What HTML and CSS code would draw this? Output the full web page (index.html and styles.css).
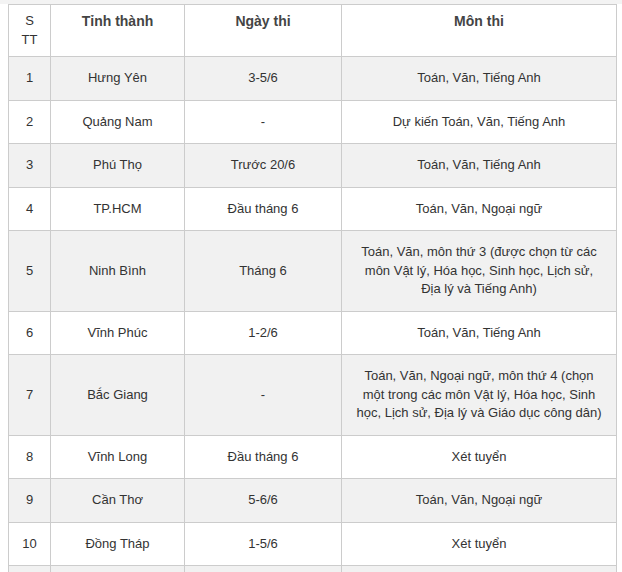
FILE: index.html
```html
<!DOCTYPE html>
<html lang="vi">
<head>
<meta charset="utf-8">
<link rel="stylesheet" href="styles.css">
</head>
<body>
<div class="topband"></div>
<table class="exam">
  <colgroup>
    <col class="c1"><col class="c2"><col class="c3"><col class="c4">
  </colgroup>
  <thead>
    <tr><th class="stt">S<br>TT</th><th>Tỉnh thành</th><th>Ngày thi</th><th>Môn thi</th></tr>
  </thead>
  <tbody>
    <tr class="alt"><td>1</td><td>Hưng Yên</td><td>3-5/6</td><td>Toán, Văn, Tiếng Anh</td></tr>
    <tr><td>2</td><td>Quảng Nam</td><td>-</td><td>Dự kiến Toán, Văn, Tiếng Anh</td></tr>
    <tr class="alt"><td>3</td><td>Phú Thọ</td><td>Trước 20/6</td><td>Toán, Văn, Tiếng Anh</td></tr>
    <tr><td>4</td><td>TP.HCM</td><td>Đầu tháng 6</td><td>Toán, Văn, Ngoại ngữ</td></tr>
    <tr class="alt"><td>5</td><td>Ninh Bình</td><td>Tháng 6</td><td>Toán, Văn, môn thứ 3 (được chọn từ các môn Vật lý, Hóa học, Sinh học, Lịch sử, Địa lý và Tiếng Anh)</td></tr>
    <tr><td>6</td><td>Vĩnh Phúc</td><td>1-2/6</td><td>Toán, Văn, Tiếng Anh</td></tr>
    <tr class="alt"><td>7</td><td>Bắc Giang</td><td>-</td><td>Toán, Văn, Ngoại ngữ, môn thứ 4 (chọn một trong các môn Vật lý, Hóa học, Sinh học, Lịch sử, Địa lý và Giáo dục công dân)</td></tr>
    <tr><td>8</td><td>Vĩnh Long</td><td>Đầu tháng 6</td><td>Xét tuyển</td></tr>
    <tr class="alt"><td>9</td><td>Cần Thơ</td><td>5-6/6</td><td>Toán, Văn, Ngoại ngữ</td></tr>
    <tr><td>10</td><td>Đồng Tháp</td><td>1-5/6</td><td>Xét tuyển</td></tr>
    <tr class="alt"><td>&nbsp;</td><td>&nbsp;</td><td>&nbsp;</td><td>&nbsp;</td></tr>
  </tbody>
</table>
</body>
</html>
```
FILE: styles.css
```css
html, body {
  margin: 0;
  padding: 0;
  background: #ffffff;
  overflow: hidden;
}
body {
  font-family: "Liberation Sans", Arial, sans-serif;
  font-size: 13px;
  color: #333333;
}
.topband {
  height: 4px;
  background: #f3f3f3;
}
.exam {
  margin-left: 8px;
  width: 608px;
  table-layout: fixed;
  border-collapse: collapse;
}
.c1 { width: 42px; }
.c2 { width: 134px; }
.c3 { width: 157px; }
.c4 { width: 275px; }
.exam th, .exam td {
  border: 1px solid #cccccc;
  text-align: center;
  line-height: 18.5px;
}
.exam th {
  padding: 7px 6px;
  vertical-align: top;
  font-size: 14px;
  font-weight: bold;
  color: #444444;
  background: #ffffff;
}
.exam th.stt {
  font-size: 13px;
  font-weight: normal;
  color: #333333;
}
.exam td {
  padding: 12px 13px;
  vertical-align: middle;
}
.exam tr.alt td {
  background: #f1f1f1;
}
```
